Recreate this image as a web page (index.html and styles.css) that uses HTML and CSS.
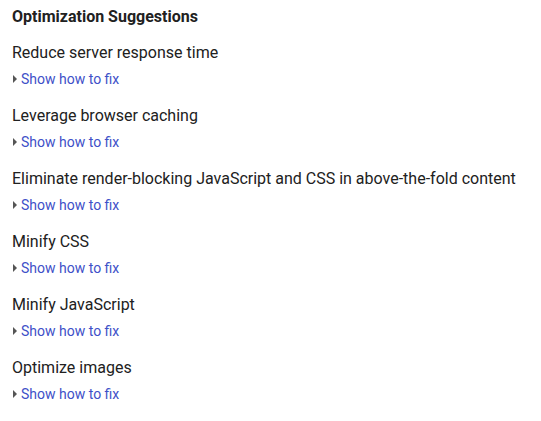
FILE: index.html
```html
<!DOCTYPE html>
<html>
<head>
<meta charset="utf-8">
<link rel="stylesheet" href="styles.css">
</head>
<body>
<div class="panel">
  <h2 class="title">Optimization Suggestions</h2>
  <ul class="list">
    <li class="item"><div class="name">Reduce server response time</div><a class="fix"><span class="tri"></span>Show how to fix</a></li>
    <li class="item"><div class="name">Leverage browser caching</div><a class="fix"><span class="tri"></span>Show how to fix</a></li>
    <li class="item"><div class="name">Eliminate render-blocking JavaScript and CSS in above-the-fold content</div><a class="fix"><span class="tri"></span>Show how to fix</a></li>
    <li class="item"><div class="name">Minify CSS</div><a class="fix"><span class="tri"></span>Show how to fix</a></li>
    <li class="item"><div class="name">Minify JavaScript</div><a class="fix"><span class="tri"></span>Show how to fix</a></li>
    <li class="item"><div class="name">Optimize images</div><a class="fix"><span class="tri"></span>Show how to fix</a></li>
  </ul>
</div>
</body>
</html>
```
FILE: styles.css
```css
html, body { margin: 0; padding: 0; background: #fff; }
body { font-family: Roboto, "Liberation Sans", sans-serif; color: #212121; }
.panel { padding: 7px 12px; }
.title { margin: 0; font-size: 16px; font-weight: 700; line-height: 20px; color: #212121; }
.list { list-style: none; margin: 16px 0 0; padding: 0; display: flex; flex-direction: column; gap: 17px; }
.item { display: flex; flex-direction: column; gap: 6px; }
.name { font-size: 16px; line-height: 20px; }
.fix { display: flex; align-items: center; font-size: 14px; line-height: 20px; color: #3e50c8; cursor: pointer; }
.tri { width: 0; height: 0; border-top: 4px solid transparent; border-bottom: 4px solid transparent; border-left: 4px solid #555; margin: 0 4px 0 1px; }
```
